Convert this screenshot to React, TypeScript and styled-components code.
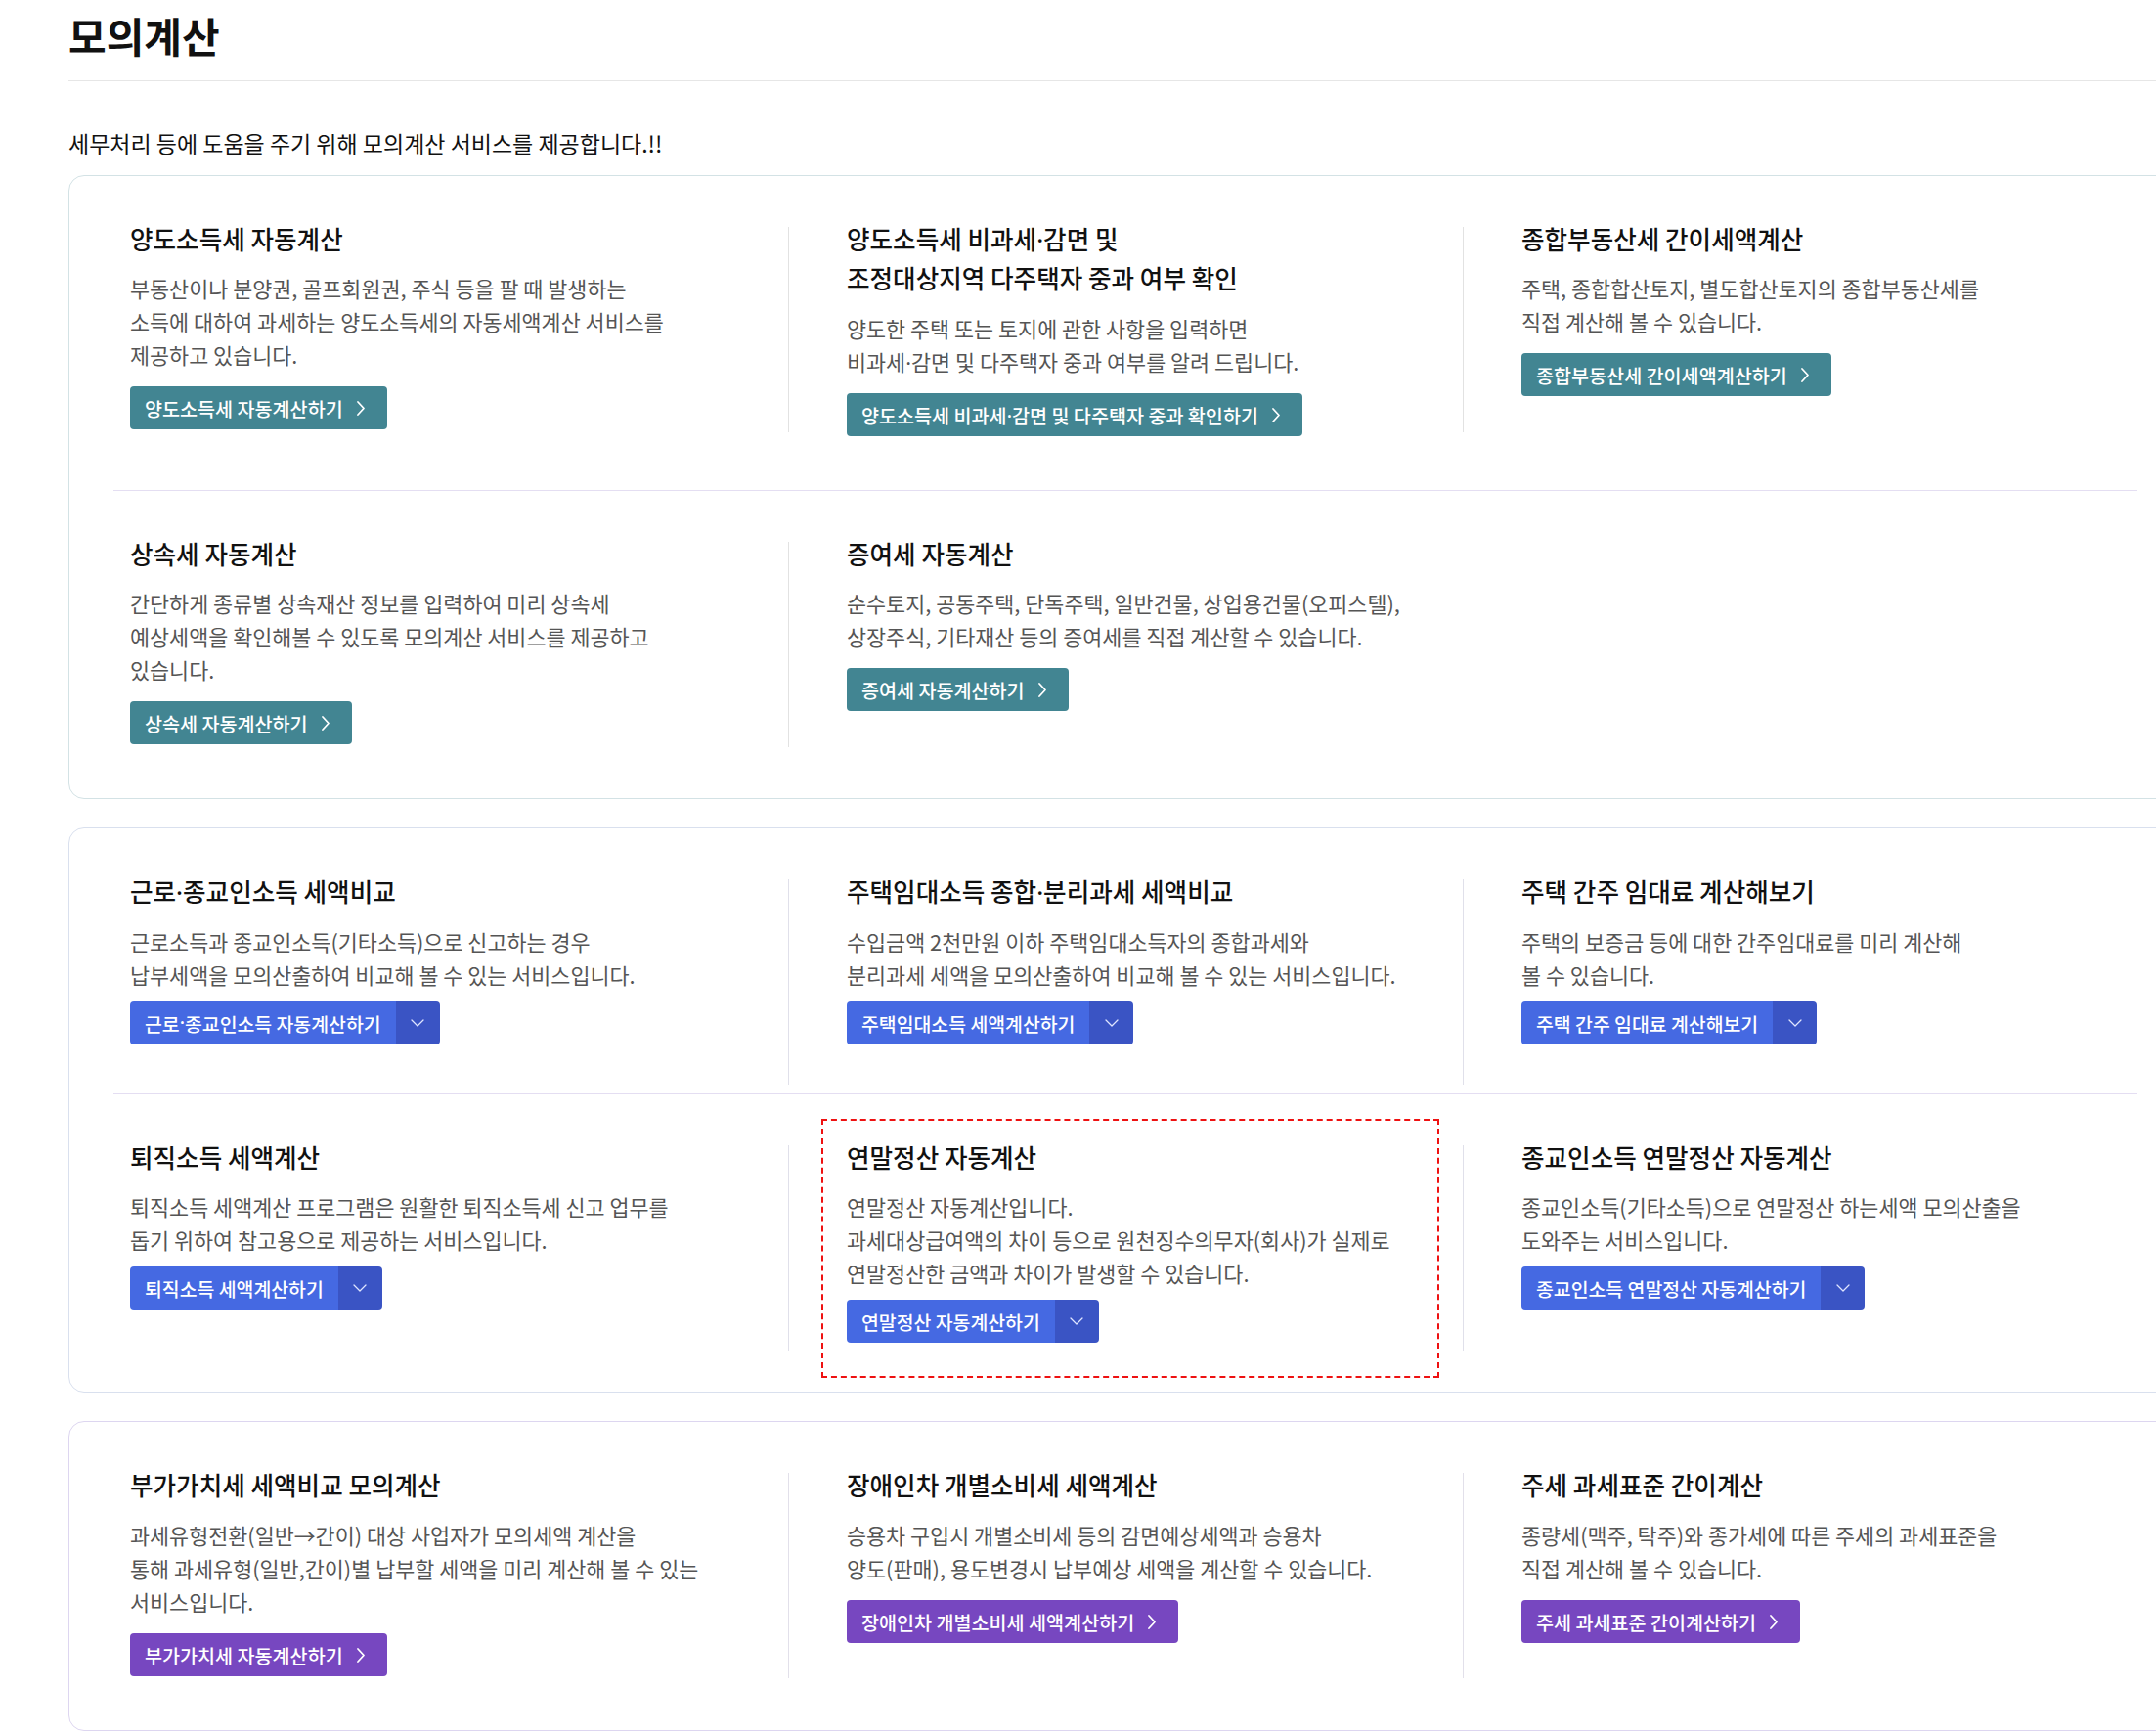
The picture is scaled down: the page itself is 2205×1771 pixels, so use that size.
import React from "react";
import styled, { createGlobalStyle, css } from "styled-components";

type Tone = "teal" | "blue" | "purple";

const palette: Record<Tone, { border: string; divider: string; sep: string; btn: string; btnDark: string }> = {
  teal: { border: "#d3e2e5", divider: "#e6e6e6", sep: "#e2e2e2", btn: "#428592", btnDark: "#36707c" },
  blue: { border: "#d9e0ee", divider: "#e0e3f0", sep: "#e0e0ea", btn: "#4569e2", btnDark: "#3a54c4" },
  purple: { border: "#ddd6f0", divider: "#e4def2", sep: "#e2e0ea", btn: "#7747c0", btnDark: "#6238a6" },
};

const GlobalStyle = createGlobalStyle`
  html, body {
    margin: 0;
    padding: 0;
    background: #ffffff;
    overflow-x: hidden;
  }
  body {
    font-family: "Noto Sans CJK KR", "Noto Sans", sans-serif;
    color: #111111;
    -webkit-font-smoothing: antialiased;
  }
  * { box-sizing: border-box; }
`;

const Page = styled.main`
  padding: 13px 0 0 70px;
  width: 2232px;
`;

const PageTitle = styled.h1`
  margin: 0;
  font-size: 42px;
  font-weight: 700;
  line-height: 46px;
  color: #111;
  padding-bottom: 23px;
  border-bottom: 1px solid #e6e6e6;
`;

const Intro = styled.p`
  margin: 45px 0 14px;
  font-size: 23px;
  line-height: 36.5px;
  color: #111;
`;

const Card = styled.section<{ $tone: Tone }>`
  width: 2162px;
  border: 1px solid ${(p) => palette[p.$tone].border};
  border-radius: 16px;
  padding: 0 45px;
  & + & {
    margin-top: 29.5px;
  }
`;

const Row = styled.ul<{ $tone: Tone }>`
  list-style: none;
  margin: 0;
  padding: 25px 0 ${(p) => (p.$tone === "blue" ? 13.5 : 18.5)}px;
  display: flex;
  & + & {
    border-top: 1px solid ${(p) => palette[p.$tone].divider};
  }
`;

const Item = styled.li<{ $tone: Tone }>`
  flex: 0 0 690px;
  position: relative;
  padding: 0 24px 0 43px;
  &:first-child {
    padding-left: 0;
  }
  & + &::before {
    content: "";
    position: absolute;
    left: 0;
    top: 27px;
    width: 1px;
    height: 210px;
    background: ${(p) => palette[p.$tone].sep};
  }
`;

const ItemBox = styled.div<{ $focused?: boolean }>`
  display: flex;
  flex-direction: column;
  align-items: flex-start;
  margin-left: -9px;
  padding: 19px 17px 36px 26px;
  ${(p) =>
    p.$focused &&
    css`
      outline: 2px dashed #ee1111;
      outline-offset: -2px;
    `}
`;

const ItemTitle = styled.h3`
  margin: 0;
  font-size: 25.6px;
  font-weight: 500;
  line-height: 40.8px;
  color: #111;
  white-space: nowrap;
`;

const ItemDesc = styled.p`
  margin: 14px 0 0;
  font-size: 21.8px;
  line-height: 34px;
  color: #555;
  white-space: nowrap;
`;

const MidDot = styled.span`
  font-family: "Noto Sans", "DejaVu Sans", sans-serif;
  line-height: 0;
`;

const LinkButton = styled.a<{ $tone: Tone }>`
  display: inline-flex;
  align-items: center;
  gap: 13px;
  height: 44px;
  margin-top: 15px;
  padding: 0 22px 0 15px;
  border-radius: 4px;
  background: ${(p) => palette[p.$tone].btn};
  color: #fff;
  font-size: 19.6px;
  font-weight: 500;
  text-decoration: none;
  white-space: nowrap;
`;

const SplitButton = styled.div`
  display: inline-flex;
  height: 44px;
  margin-top: 10px;
  border-radius: 4px;
  overflow: hidden;
`;

const SplitMain = styled.a`
  display: flex;
  align-items: center;
  padding: 0 15px;
  background: ${palette.blue.btn};
  color: #fff;
  font-size: 19.4px;
  font-weight: 500;
  text-decoration: none;
  white-space: nowrap;
`;

const SplitToggle = styled.button`
  width: 45px;
  border: none;
  padding: 0;
  background: ${palette.blue.btnDark};
  display: flex;
  align-items: center;
  justify-content: center;
  cursor: pointer;
`;

const ChevronRight = () => (
  <svg width="10" height="17" viewBox="0 0 10 17" fill="none" aria-hidden="true">
    <path d="M2 2 L8 8.5 L2 15" stroke="#ffffff" strokeWidth="1.8" strokeLinecap="round" strokeLinejoin="round" />
  </svg>
);

const ChevronDown = () => (
  <svg width="14" height="8" viewBox="0 0 14 8" fill="none" aria-hidden="true">
    <path d="M1 1 L7 7 L13 1" stroke="#dfe5ff" strokeWidth="1.3" strokeLinecap="round" strokeLinejoin="round" />
  </svg>
);

type Entry = {
  title: string[];
  desc: string[];
  button: string;
  split?: boolean;
  focused?: boolean;
};

type CardData = { tone: Tone; rows: Entry[][] };

const cards: CardData[] = [
  {
    tone: "teal",
    rows: [
      [
        {
          title: ["양도소득세 자동계산"],
          desc: [
            "부동산이나 분양권, 골프회원권, 주식 등을 팔 때 발생하는",
            "소득에 대하여 과세하는 양도소득세의 자동세액계산 서비스를",
            "제공하고 있습니다.",
          ],
          button: "양도소득세 자동계산하기",
        },
        {
          title: ["양도소득세 비과세·감면 및", "조정대상지역 다주택자 중과 여부 확인"],
          desc: ["양도한 주택 또는 토지에 관한 사항을 입력하면", "비과세·감면 및 다주택자 중과 여부를 알려 드립니다."],
          button: "양도소득세 비과세·감면 및 다주택자 중과 확인하기",
        },
        {
          title: ["종합부동산세 간이세액계산"],
          desc: ["주택, 종합합산토지, 별도합산토지의 종합부동산세를", "직접 계산해 볼 수 있습니다."],
          button: "종합부동산세 간이세액계산하기",
        },
      ],
      [
        {
          title: ["상속세 자동계산"],
          desc: [
            "간단하게 종류별 상속재산 정보를 입력하여 미리 상속세",
            "예상세액을 확인해볼 수 있도록 모의계산 서비스를 제공하고",
            "있습니다.",
          ],
          button: "상속세 자동계산하기",
        },
        {
          title: ["증여세 자동계산"],
          desc: [
            "순수토지, 공동주택, 단독주택, 일반건물, 상업용건물(오피스텔),",
            "상장주식, 기타재산 등의 증여세를 직접 계산할 수 있습니다.",
          ],
          button: "증여세 자동계산하기",
        },
      ],
    ],
  },
  {
    tone: "blue",
    rows: [
      [
        {
          title: ["근로·종교인소득 세액비교"],
          desc: ["근로소득과 종교인소득(기타소득)으로 신고하는 경우", "납부세액을 모의산출하여 비교해 볼 수 있는 서비스입니다."],
          button: "근로·종교인소득 자동계산하기",
          split: true,
        },
        {
          title: ["주택임대소득 종합·분리과세 세액비교"],
          desc: ["수입금액 2천만원 이하 주택임대소득자의 종합과세와", "분리과세 세액을 모의산출하여 비교해 볼 수 있는 서비스입니다."],
          button: "주택임대소득 세액계산하기",
          split: true,
        },
        {
          title: ["주택 간주 임대료 계산해보기"],
          desc: ["주택의 보증금 등에 대한 간주임대료를 미리 계산해", "볼 수 있습니다."],
          button: "주택 간주 임대료 계산해보기",
          split: true,
        },
      ],
      [
        {
          title: ["퇴직소득 세액계산"],
          desc: ["퇴직소득 세액계산 프로그램은 원활한 퇴직소득세 신고 업무를", "돕기 위하여 참고용으로 제공하는 서비스입니다."],
          button: "퇴직소득 세액계산하기",
          split: true,
        },
        {
          title: ["연말정산 자동계산"],
          desc: [
            "연말정산 자동계산입니다.",
            "과세대상급여액의 차이 등으로 원천징수의무자(회사)가 실제로",
            "연말정산한 금액과 차이가 발생할 수 있습니다.",
          ],
          button: "연말정산 자동계산하기",
          split: true,
          focused: true,
        },
        {
          title: ["종교인소득 연말정산 자동계산"],
          desc: ["종교인소득(기타소득)으로 연말정산 하는세액 모의산출을", "도와주는 서비스입니다."],
          button: "종교인소득 연말정산 자동계산하기",
          split: true,
        },
      ],
    ],
  },
  {
    tone: "purple",
    rows: [
      [
        {
          title: ["부가가치세 세액비교 모의계산"],
          desc: [
            "과세유형전환(일반→간이) 대상 사업자가 모의세액 계산을",
            "통해 과세유형(일반,간이)별 납부할 세액을 미리 계산해 볼 수 있는",
            "서비스입니다.",
          ],
          button: "부가가치세 자동계산하기",
        },
        {
          title: ["장애인차 개별소비세 세액계산"],
          desc: ["승용차 구입시 개별소비세 등의 감면예상세액과 승용차", "양도(판매), 용도변경시 납부예상 세액을 계산할 수 있습니다."],
          button: "장애인차 개별소비세 세액계산하기",
        },
        {
          title: ["주세 과세표준 간이계산"],
          desc: ["종량세(맥주, 탁주)와 종가세에 따른 주세의 과세표준을", "직접 계산해 볼 수 있습니다."],
          button: "주세 과세표준 간이계산하기",
        },
      ],
    ],
  },
];

const Text = ({ value }: { value: string }) => {
  const parts = value.split("·");
  return (
    <>
      {parts.map((p, i) => (
        <React.Fragment key={i}>
          {i > 0 && <MidDot>·</MidDot>}
          {p}
        </React.Fragment>
      ))}
    </>
  );
};

const Lines = ({ lines }: { lines: string[] }) => (
  <>
    {lines.map((l, i) => (
      <React.Fragment key={i}>
        {i > 0 && <br />}
        <Text value={l} />
      </React.Fragment>
    ))}
  </>
);

export default function App() {
  return (
    <>
      <GlobalStyle />
      <Page>
        <PageTitle>모의계산</PageTitle>
        <Intro>세무처리 등에 도움을 주기 위해 모의계산 서비스를 제공합니다.!!</Intro>
        {cards.map((card, ci) => (
          <Card key={ci} $tone={card.tone}>
            {card.rows.map((row, ri) => (
              <Row key={ri} $tone={card.tone}>
                {row.map((e, ei) => (
                  <Item key={ei} $tone={card.tone}>
                    <ItemBox $focused={e.focused}>
                      <ItemTitle>
                        <Lines lines={e.title} />
                      </ItemTitle>
                      <ItemDesc>
                        <Lines lines={e.desc} />
                      </ItemDesc>
                      {e.split ? (
                        <SplitButton>
                          <SplitMain href="#">
                            <Text value={e.button} />
                          </SplitMain>
                          <SplitToggle type="button" aria-label="메뉴 열기">
                            <ChevronDown />
                          </SplitToggle>
                        </SplitButton>
                      ) : (
                        <LinkButton href="#" $tone={card.tone}>
                          <span>
                            <Text value={e.button} />
                          </span>
                          <ChevronRight />
                        </LinkButton>
                      )}
                    </ItemBox>
                  </Item>
                ))}
              </Row>
            ))}
          </Card>
        ))}
      </Page>
    </>
  );
}
